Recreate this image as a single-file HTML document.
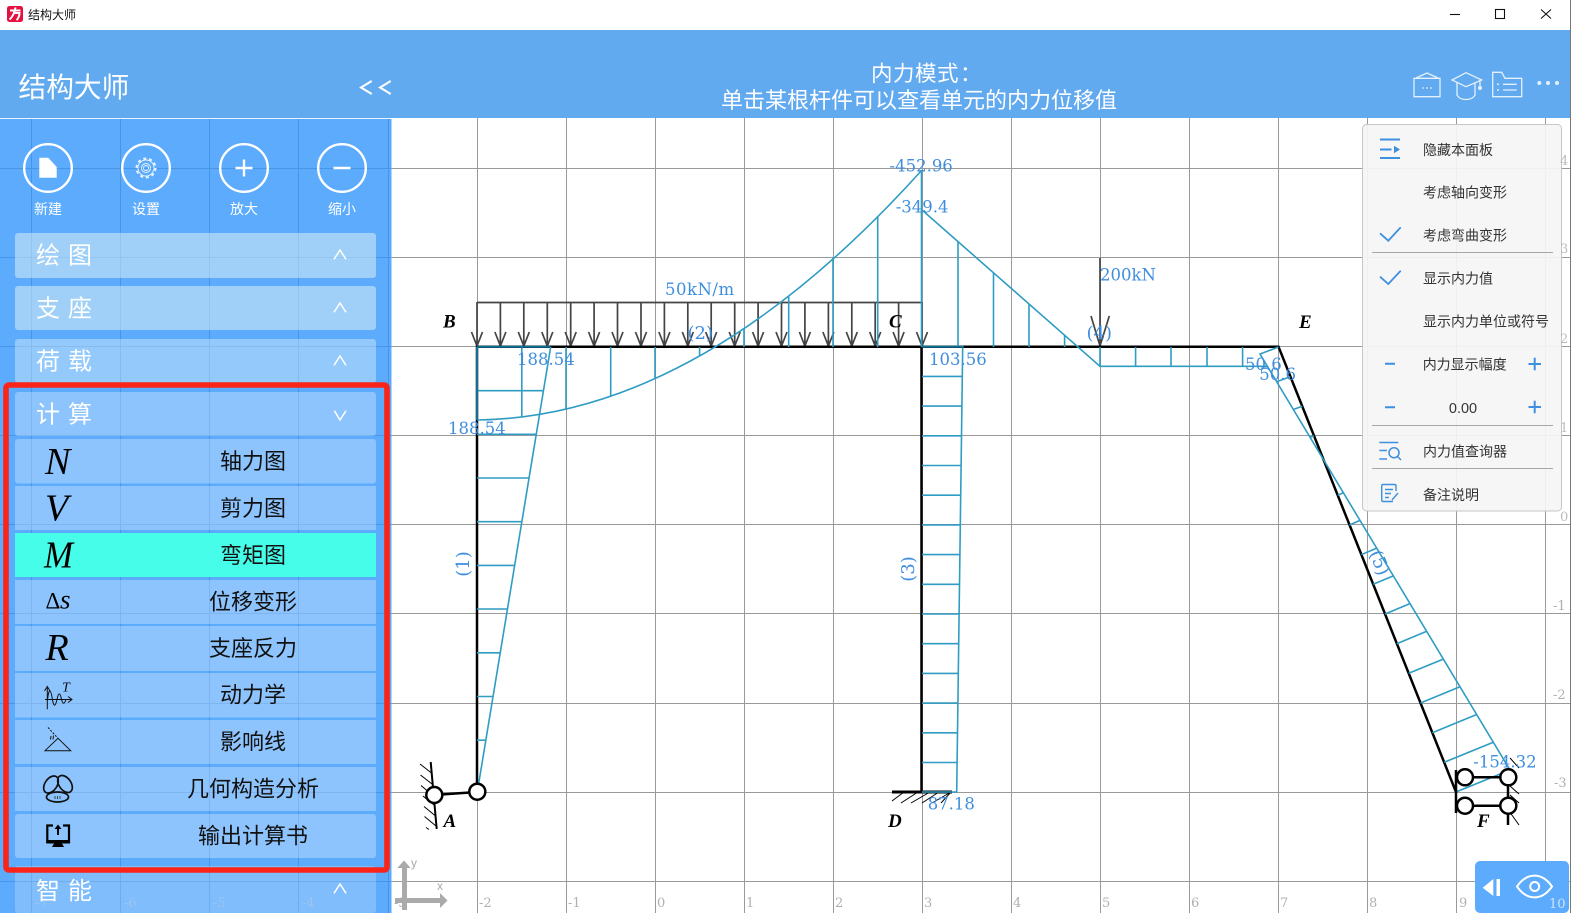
<!DOCTYPE html>
<html lang="zh"><head><meta charset="utf-8"><title>结构大师</title>
<style>
html,body{margin:0;padding:0;background:#fff;width:1571px;height:913px;overflow:hidden}
svg{display:block;position:absolute;left:0;top:0}
.cj{font-family:"Liberation Sans","Noto Sans CJK SC",sans-serif}
.lb{font-family:"DejaVu Serif",serif;font-size:16.5px;fill:#3f8ede}
.lb2{font-family:"DejaVu Serif",serif;font-size:18px;fill:#3f8ede}
.ax{font-family:"DejaVu Serif",serif;font-size:13px;fill:#b0b0b0}
.nm{font-family:"Liberation Serif",serif;font-style:italic;font-weight:bold;font-size:19px;fill:#000}
.it{font-size:22px;fill:#111;text-anchor:middle}
.sec{font-size:24px;fill:#fff}
.men{font-size:14px;fill:#333}
.sym{font-family:"Liberation Serif",serif;font-style:italic;font-size:38px;fill:#000}
.btn{font-size:14px;fill:#fff;text-anchor:middle}
</style></head><body>
<svg width="1571" height="913" viewBox="0 0 1571 913" xmlns="http://www.w3.org/2000/svg">
<defs>
<g id="a"><path d="M0 302V346M-5.5 332L0 346L5.5 332" fill="none" stroke="#444" stroke-width="1.7"/></g>
</defs>
<rect width="1571" height="913" fill="#fff"/>

<!-- grid -->
<g stroke="#9a9a9a" stroke-width="1">
<path d="M477.5 118V913M566.5 118V913M655.5 118V913M744.5 118V913M833.5 118V913M922.5 118V913M1011.5 118V913M1100.5 118V913M1189.5 118V913M1278.5 118V913M1367.5 118V913M1456.5 118V913M1545.5 118V913"/>
<path d="M390 168.5H1571M390 257.5H1571M390 346.5H1571M390 435.5H1571M390 524.5H1571M390 613.5H1571M390 703.5H1571M390 792.5H1571M390 881.5H1571"/>
</g>
<g class="ax">
<text class="ax" x="394" y="907">-3</text><text class="ax" x="479" y="907">-2</text><text class="ax" x="568" y="907">-1</text><text class="ax" x="657" y="907">0</text><text class="ax" x="746" y="907">1</text><text class="ax" x="835" y="907">2</text><text class="ax" x="924" y="907">3</text><text class="ax" x="1013" y="907">4</text><text class="ax" x="1102" y="907">5</text><text class="ax" x="1191" y="907">6</text><text class="ax" x="1280" y="907">7</text><text class="ax" x="1369" y="907">8</text><text class="ax" x="1459" y="907">9</text>
<text class="ax" x="1553" y="610">-1</text><text class="ax" x="1553" y="699">-2</text><text class="ax" x="1554" y="787">-3</text><text class="ax" x="1554" y="877">-4</text>
</g>

<!-- distributed load -->
<path d="M477 302.5H922" stroke="#444" stroke-width="1.7"/>
<use href="#a" x="477"/><use href="#a" x="500.4"/><use href="#a" x="523.8"/><use href="#a" x="547.3"/><use href="#a" x="570.7"/><use href="#a" x="594.1"/><use href="#a" x="617.5"/><use href="#a" x="641"/><use href="#a" x="664.4"/><use href="#a" x="687.8"/><use href="#a" x="711.2"/><use href="#a" x="734.7"/><use href="#a" x="758.1"/><use href="#a" x="781.5"/><use href="#a" x="804.9"/><use href="#a" x="828.4"/><use href="#a" x="851.8"/><use href="#a" x="875.2"/><use href="#a" x="898.6"/><use href="#a" x="922"/>
<path d="M1100 258V346M1091 316L1100 346L1109.3 316" fill="none" stroke="#444" stroke-width="1.7"/>

<!-- frame -->
<g fill="none" stroke="#000" stroke-width="2.5">
<path d="M477 792V346.7H1278.5L1456 792"/>
<path d="M921.5 346.7V792"/>
<path d="M892 792H952" stroke-width="3"/>
<path d="M434 795L477 792"/>
<path d="M430.7 762L436.7 829" stroke-width="2"/>
</g>
<g stroke="#000" stroke-width="1" fill="none">
<path d="M420 764L431.5 773M420.5 775L432 784M421 785.5L431 794M423 796L434 805M424 806.5L435 815.5M424.5 816.5L436 826M426 827.5L429 829.5"/>
<path d="M904 792L892 801M918 792L901 803M930 792L911 803M939 792L922 803M951 792L932 803M951 792L941 803"/>
</g>

<!-- moment diagram -->
<g fill="none" stroke="#2f9cc4" stroke-width="1.6">
<path d="M477.3 792L550.7 346.7"/>
<path d="M477 390.7H543.4M477 434.3H536.1M477 478H529.1M477 521.7H521.9M477 565.4H514.7M477 609H507.5M477 652.8H500.3M477 696.5H493M477 740.2H485.9"/>
<path d="M477 420Q699.5 417 922 170"/>
<path d="M521.8 347V417.3M566 347V409.3M610.7 347V396M655 347V378.3M699.6 347V356M744 347V329M788.7 347V296M833 347V257.3M877.7 347V216M921.5 347V170"/>
<path d="M922 210L1100 366.3H1268M958 347V241.7M993.5 347V272.5M1029 347V304M1064.6 347V335M1100 347V366.3M1135.6 347V366.3M1171 347V366.3M1207 347V366.3M1242.6 347V366.3"/>
<path d="M1278.5 347L1260 354L1510 770L1456 792"/>
<path d="M1290.3 376.7L1276.7 381.7M1302.2 406.3L1293.3 409.5M1314 436L1310 437.2M1337.7 495.3L1343.3 492.7M1349.5 525L1360 520.4M1361.3 554.7L1376.7 548.1M1373.2 584.3L1393.3 575.9M1385 614L1410 603.6M1396.8 643.7L1426.7 631.3M1408.7 673.3L1443.3 659.1M1420.5 703L1460 686.8M1432.3 732.7L1476.7 714.5M1444.2 762.3L1493.3 742.3"/>
<path d="M922 346.7H962.7L956.7 792H922"/>
<path d="M922 376.4H962.3M922 406.1H961.9M922 435.8H961.5M922 465.5H961.1M922 495.2H960.7M922 524.9H960.3M922 554.6H959.9M922 584.3H959.5M922 614H959.1M922 643.7H958.7M922 673.4H958.3M922 703.1H957.9M922 732.8H957.5M922 762.5H957.1"/>
</g>
<path d="M477 346.7H550M477 346.7V420" fill="none" stroke="#0f6f94" stroke-width="2"/>
<path d="M922 346.7H963" fill="none" stroke="#0f6f94" stroke-width="2"/>

<!-- F support + circles -->
<g fill="none" stroke="#000" stroke-width="2.5">
<path d="M1456 770V813M1465 777.3H1508M1465 805.7H1508M1508 770V825"/>
</g>
<g stroke="#000" stroke-width="1" fill="none">
<path d="M1510 758L1519 768M1510 786L1519 794M1510 795L1519 803M1509 811L1519 825"/>
</g>
<g fill="#fff" stroke="#000" stroke-width="2.5">
<circle cx="434.3" cy="795" r="8"/><circle cx="477.3" cy="791.7" r="8"/>
<circle cx="1465" cy="777.3" r="8"/><circle cx="1465" cy="805.7" r="8"/><circle cx="1508.3" cy="777.3" r="8"/><circle cx="1508.3" cy="805.7" r="8"/>
</g>

<!-- labels -->
<text class="lb" x="889.5" y="171.7">-452.96</text>
<text class="lb" x="895.7" y="212.7">-349.4</text>
<text class="lb" x="665" y="295" letter-spacing=".5">50kN/m</text>
<text class="lb2" x="687.5" y="339">(2)</text>
<text class="lb" x="517" y="365">188.54</text>
<text class="lb" x="448" y="434">188.54</text>
<text class="lb" x="929" y="365">103.56</text>
<text class="lb" x="927.7" y="809.3">87.18</text>
<text class="lb" x="1100" y="280.7">200kN</text>
<text class="lb2" x="1086.5" y="339">(4)</text>
<text class="lb" x="1245" y="370">50.6</text>
<text class="lb" x="1259.3" y="380">50.6</text>
<text class="lb" x="1473.3" y="767.3">-154.32</text>
<text class="lb2" text-anchor="middle" transform="translate(469 564) rotate(-90)">(1)</text>
<text class="lb2" text-anchor="middle" transform="translate(914 569) rotate(-90)">(3)</text>
<text class="lb2" text-anchor="middle" transform="translate(1374 565) rotate(68)">(5)</text>
<text class="nm" x="443" y="327.3">B</text><text class="nm" x="889" y="327.7">C</text><text class="nm" x="1299" y="328">E</text><text class="nm" x="443.5" y="827">A</text><text class="nm" x="888" y="827">D</text><text class="nm" x="1477" y="827">F</text>

<!-- axes -->
<g fill="#aaa">
<rect x="402" y="866" width="5" height="44"/><rect x="395" y="898" width="46" height="5"/>
<path d="M397.3 868L404 860.5L410.7 868ZM440 893L447.5 900.5L440 908Z"/>
</g>
<text x="411" y="867" font-family="Liberation Sans,sans-serif" font-size="12" fill="#aaa">y</text>
<text x="437" y="890" font-family="Liberation Sans,sans-serif" font-size="12" fill="#aaa">x</text>

<!-- eye panel -->
<rect x="1475" y="861" width="94" height="52" rx="5" fill="#5cabfd"/>
<path d="M1482.7 887.7L1493.3 879V896Z" fill="#fff"/><rect x="1496.5" y="879" width="3.5" height="17" fill="#fff"/>
<path d="M1517 886.5C1527 872 1542 872 1552 886.5C1542 901 1527 901 1517 886.5Z" fill="none" stroke="#fff" stroke-width="2"/>
<circle cx="1534.7" cy="886.5" r="4.5" fill="none" stroke="#fff" stroke-width="2"/>
<text class="ax" x="1549" y="908" style="fill:#d0e4fa">10</text>

<!-- header -->
<rect x="0" y="30" width="1570" height="88" fill="#62aaf0"/>
<text class="cj" x="18.5" y="97" font-size="27.7" fill="#fff">结构大师</text>
<path d="M371.7 81L361 87.5L371.7 94M390.7 81L380 87.5L390.7 94" fill="none" stroke="#fff" stroke-width="2"/>
<text class="cj" x="871 893 915 937 960" y="81" font-size="21.5" fill="#fff">内力模式：</text>
<text class="cj" x="919" y="108" font-size="22" fill="#fff" text-anchor="middle">单击某根杆件可以查看单元的内力位移值</text>
<g fill="none" stroke="#e4f0fc" stroke-width="1.3">
<path d="M1414 78.3H1440V96.7H1414ZM1416 78L1427 73L1438 78"/>
<path d="M1452 80L1466 72.7L1481.7 80L1466 86.7ZM1457 83V95C1460 101 1472 101 1475 95V83M1480 80V87"/>
<path d="M1492.7 96.7V72.3H1501.7L1505 78.3H1521.7V96.7ZM1503 84.3H1516.7M1503 90H1516.7"/>
</g>
<g fill="#e4f0fc"><circle cx="1423" cy="88" r=".9"/><circle cx="1427" cy="88" r=".9"/><circle cx="1431" cy="88" r=".9"/><circle cx="1498" cy="84.3" r="1"/><circle cx="1498" cy="90" r="1"/><circle cx="1480" cy="88" r="2"/>
<circle cx="1539.3" cy="83" r="2"/><circle cx="1548" cy="83" r="2"/><circle cx="1557" cy="83" r="2"/></g>

<!-- titlebar -->
<rect x="7" y="6" width="16" height="16" rx="2.5" fill="#e4123f"/>
<path d="M10 10.5H20.5M15.5 7.5C14.5 13 12.5 17 9.5 19.5M13 13H19.5C19.5 16 18 19 16.5 20" fill="none" stroke="#fff" stroke-width="2"/>
<text class="cj" x="28" y="19" font-size="12" fill="#111">结构大师</text>
<g fill="none" stroke="#111" stroke-width="1.1"><path d="M1450 14.5H1460"/><rect x="1495.5" y="9.5" width="9" height="9"/><path d="M1541 9.5L1551 18.5M1551 9.5L1541 18.5"/></g>
<rect x="1570" y="0" width="1" height="913" fill="#777"/>

<!-- sidebar -->
<rect x="0" y="119" width="391.5" height="794" fill="#5cabfd"/>
<path d="M0 118.5H391" stroke="#e8f3ff" stroke-width="1"/>
<g stroke="#4795ea" stroke-width="1">
<path d="M31.5 119V913M120.5 119V913M209.5 119V913M298.5 119V913M388.5 119V913"/>
<path d="M0 168.5H391M0 257.5H391M0 346.5H391M0 435.5H391M0 524.5H391M0 613.5H391M0 703.5H391M0 792.5H391M0 881.5H391"/>
</g>
<g fill="#7fb4ee" font-family="DejaVu Serif,serif" font-size="13"><text x="35" y="907">-7</text><text x="124" y="907">-6</text><text x="213" y="907">-5</text><text x="302" y="907">-4</text></g>

<g fill="none" stroke="#fff" stroke-width="2.4">
<circle cx="48" cy="168" r="23.8"/><circle cx="146" cy="168" r="23.8"/><circle cx="244" cy="168" r="23.8"/><circle cx="342" cy="168" r="23.8"/>
<path d="M235.5 168H252.5M244 159.5V176.5M333.5 168H350.5"/>
</g>
<path d="M39.3 157.7H48.3L56.7 167V177.7H39.3Z" fill="#fff"/>
<g fill="none" stroke="#eaf4ff" stroke-width=".9">
<circle cx="146" cy="168" r="8"/><circle cx="146" cy="168" r="9.5" stroke-width="2" stroke-dasharray="3 2.96"/><circle cx="146" cy="168" r="4.5"/><circle cx="146" cy="168" r="2.5"/>
</g>
<text class="cj btn" x="48" y="214">新建</text><text class="cj btn" x="146" y="214">设置</text><text class="cj btn" x="244" y="214">放大</text><text class="cj btn" x="342" y="214">缩小</text>

<!-- sections -->
<g>
<rect x="15" y="233" width="361" height="45" rx="3" fill="rgba(228,245,243,.5)"/>
<rect x="15" y="286" width="361" height="44" rx="3" fill="rgba(228,245,243,.5)"/>
<rect x="15" y="339" width="361" height="44" rx="3" fill="rgba(240,250,250,.38)"/>
<rect x="15" y="392" width="361" height="44" rx="3" fill="rgba(255,255,255,.3)"/>
<rect x="15" y="439" width="361" height="44.5" rx="3" fill="rgba(255,255,255,.3)"/>
<rect x="15" y="486" width="361" height="44" fill="rgba(255,255,255,.3)"/>
<rect x="15" y="533" width="361" height="44" fill="#46fde9"/>
<rect x="15" y="580" width="361" height="44" fill="rgba(255,255,255,.3)"/>
<rect x="15" y="626" width="361" height="45" fill="rgba(255,255,255,.3)"/>
<rect x="15" y="673" width="361" height="44.5" fill="rgba(255,255,255,.3)"/>
<rect x="15" y="720" width="361" height="44" fill="rgba(255,255,255,.3)"/>
<rect x="15" y="767" width="361" height="44" fill="rgba(255,255,255,.3)"/>
<rect x="15" y="814" width="361" height="44" rx="3" fill="rgba(255,255,255,.3)"/>
<rect x="15" y="866" width="361" height="47" rx="3" fill="rgba(255,255,255,.22)"/>
</g>
<g class="cj">
<text class="cj sec" x="36 68" y="263.5">绘图</text>
<text class="cj sec" x="36 68" y="316.5">支座</text>
<text class="cj sec" x="36 68" y="369.5">荷载</text>
<text class="cj sec" x="36 68" y="422.5">计算</text>
<text class="cj sec" x="36 68" y="899">智能</text>
<text class="cj it" x="253" y="469">轴力图</text>
<text class="cj it" x="253" y="516">剪力图</text>
<text class="cj it" x="253" y="563">弯矩图</text>
<text class="cj it" x="253" y="609.5">位移变形</text>
<text class="cj it" x="253" y="656">支座反力</text>
<text class="cj it" x="253" y="702.5">动力学</text>
<text class="cj it" x="253" y="749.5">影响线</text>
<text class="cj it" x="253" y="796.5">几何构造分析</text>
<text class="cj it" x="253" y="843.5">输出计算书</text>
</g>
<g fill="none" stroke="#fff" stroke-width="1.5">
<path d="M334 259.3L340 250L346 259.3M334 312.3L340 303L346 312.3M334 365.3L340 356L346 365.3M334.3 410.7L340 420L346 410.7M334 893.3L340 884L346 893.3"/>
</g>
<text class="sym" x="45" y="474">N</text>
<text class="sym" x="45" y="520.7">V</text>
<text class="sym" x="44" y="567.3" textLength="29" lengthAdjust="spacingAndGlyphs">M</text>
<text x="45.5" y="608.3" font-family="Liberation Serif,serif" font-size="23" fill="#000">Δ</text>
<text x="60" y="608.3" font-family="Liberation Serif,serif" font-style="italic" font-size="27" fill="#000">s</text>
<text class="sym" x="45.5" y="660">R</text>

<!-- dynamics icon -->
<g fill="none" stroke="#111" stroke-width="1">
<path d="M47.3 686.7V709.3M44.5 691L47.3 686.5L50 691M45 699.5H72M68 696.5L72 699.5L68 702.5"/>
<path d="M47.5 700C49 686 51 690 52.5 700C54 708 55.5 706 57 699.5C58.5 692 60 692 61.5 699.5C63 705 64.5 704 66 699.5"/>
</g>
<text x="62" y="691.7" font-family="Liberation Serif,serif" font-style="italic" font-size="14" fill="#111">T</text>
<!-- influence icon -->
<g fill="none" stroke="#111" stroke-width="1">
<path d="M45 750.7H70.7L58 738.3Z"/>
<path d="M48 727.5L58 738.3" stroke-dasharray="2 1.5"/>
<path d="M50.5 739.5L51 736M53 739.5L53.5 735.5"/>
</g>
<!-- geometric icon -->
<g fill="none" stroke="#111" stroke-width="1.7">
<ellipse cx="51" cy="784.5" rx="9.5" ry="6" transform="rotate(-55 51 784.5)"/>
<ellipse cx="65" cy="784" rx="9.5" ry="6" transform="rotate(55 65 784)"/>
<ellipse cx="57.5" cy="797" rx="11" ry="5"/>
</g>
<path d="M55 796V799M57.5 796V799M60 796V799" stroke="#111" stroke-width=".7"/>
<!-- output icon -->
<path d="M53 825.5H47.3V842H69V825.5H63" fill="none" stroke="#000" stroke-width="2.2"/>
<path d="M46.3 840H70V843.5H46.3ZM54 843.5H62L64 847H52Z" fill="#000"/>
<path d="M58 835V827" stroke="#000" stroke-width="2"/><path d="M54.5 829L58 824.5L61.5 829Z" fill="#000"/>

<!-- red box -->
<rect x="6" y="385" width="381" height="485" rx="3" fill="none" stroke="#fa2418" stroke-width="5.6"/>

<!-- right menu -->
<rect x="1362.5" y="124.5" width="199" height="386.5" rx="4" fill="rgba(245,245,245,.93)" stroke="#c6c6c6" stroke-width="1"/>
<path d="M1372 252.5H1553M1372 425.5H1553M1372 468.5H1553" stroke="#a8a8a8" stroke-width="1"/>
<g class="ax" opacity=".85">
<text class="ax" x="1560" y="165">4</text><text class="ax" x="1560" y="253">3</text><text class="ax" x="1560" y="343">2</text><text class="ax" x="1560" y="432">1</text><text class="ax" x="1560" y="521">0</text>
</g>
<g class="cj">
<text class="cj men" x="1423" y="155">隐藏本面板</text>
<text class="cj men" x="1423" y="197.3">考虑轴向变形</text>
<text class="cj men" x="1423" y="240.3">考虑弯曲变形</text>
<text class="cj men" x="1423" y="283.3">显示内力值</text>
<text class="cj men" x="1423" y="326.3">显示内力单位或符号</text>
<text class="cj men" x="1422.7" y="369.5">内力显示幅度</text>
<text x="1463" y="413" font-family="Liberation Sans,sans-serif" font-size="14.5" fill="#333" text-anchor="middle">0.00</text>
<text class="cj men" x="1423" y="456.5">内力值查询器</text>
<text class="cj men" x="1423" y="500">备注说明</text>
</g>
<g fill="none" stroke="#3f8fe0" stroke-width="2">
<path d="M1380 139.5H1400M1380 158H1400M1380 149.5H1391.5"/>
<path d="M1380 233.3L1388.3 240.7L1400.7 227.3M1380 276.7L1388.3 284L1400.7 270.7" stroke-width="1.8"/>
<path d="M1385 363.7H1395M1385 407.3H1395M1528.5 364H1541M1534.7 357.7V370.3M1528.5 407H1541M1534.7 400.7V413.3"/>
<path d="M1379.3 442.5H1398.3M1379.3 450.5H1387M1379.3 459H1387" stroke-width="1.5"/>
<circle cx="1394" cy="452.7" r="5" stroke-width="1.5"/><path d="M1397.5 456.5L1401 460" stroke-width="1.5"/>
<path d="M1396 491V486Q1396 484.5 1394.5 484.5H1383Q1381.7 484.5 1381.7 486V500Q1381.7 501.5 1383 501.5H1393M1385 489.5H1393M1385 493.5H1391M1385 497.5H1389M1398 493L1392 500" stroke-width="1.4"/>
</g>
<path d="M1394 145.7V153.3L1400 149.5Z" fill="#3f8fe0"/>
</svg>
</body></html>
